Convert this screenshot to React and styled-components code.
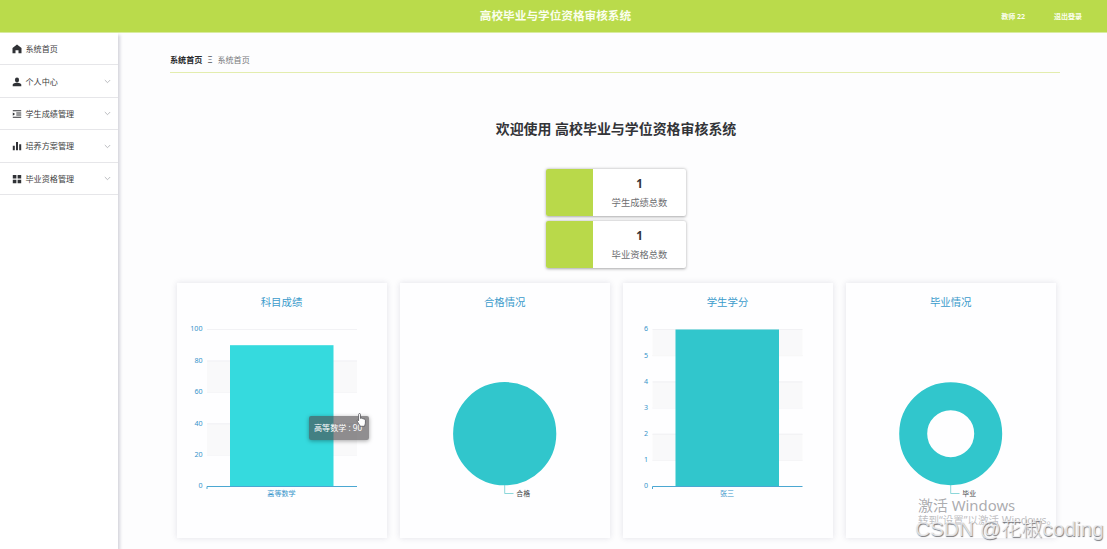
import React from 'react';
import styled, { createGlobalStyle } from 'styled-components';

const GlobalStyle = createGlobalStyle`
  * { box-sizing: border-box; }
  body {
    margin: 0;
    overflow: hidden;
    background: #fdfdfe;
    color: #303133;
    font-family: "Noto Sans", "Noto Sans CJK SC", sans-serif;
    font-size: 8px;
  }
`;

const Page = styled.div`
  position: relative;
  height: 549px;
  display: flex;
  flex-direction: column;
  overflow: hidden;
`;

const Header = styled.header`
  flex: none;
  height: 33px;
  display: grid;
  grid-template-columns: 1fr auto 1fr;
  align-items: center;
  padding: 0 25px 1px 29px;
  background: #badb4b;
  border-bottom: 1px solid #d9eca0;
  color: #fff;
  font-weight: 700;
`;

const HeaderTitle = styled.h1`
  grid-column: 2;
  margin: 0;
  font-size: 11.65px;
  line-height: 32px;
  color: #fbfeee;
`;

const HeaderLinks = styled.nav`
  display: flex;
  justify-content: flex-end;
  gap: 29px;
  font-size: 7px;
  color: #fbfeee;
`;

const Body = styled.div`
  flex: 1;
  display: flex;
  min-height: 0;
`;

const Sidebar = styled.aside`
  flex: none;
  width: 118px;
  background: #fff;
  box-shadow: 2px 2px 3px rgba(50, 50, 80, 0.2);
`;

const MenuItem = styled.div`
  height: 32.4px;
  display: flex;
  align-items: center;
  padding: 1px 7px 0 12px;
  border-bottom: 1px solid #e6e6e9;
  font-size: 8.1px;
  line-height: 12px;
  color: #3c3d40;
`;

const MenuIcon = styled.svg`
  width: 10px;
  height: 10px;
  margin-right: 3.5px;
  fill: #303236;
`;

const MenuLabel = styled.span`
  flex: 1;
`;

const Chevron = styled.svg`
  width: 7px;
  height: 5px;
  fill: none;
  stroke: #a9abb0;
  stroke-width: 0.8;
`;

const Main = styled.main`
  flex: 1;
  padding: 17px 47px 0 52px;
`;

const Breadcrumb = styled.div`
  height: 23px;
  display: flex;
  gap: 5px;
  border-bottom: 1.4px solid #e3edae;
  font-size: 8.1px;
  line-height: 20px;
  color: #77787b;
`;

const Current = styled.b`
  color: #27282b;
`;

const Separator = styled.span`
  width: 5px;
  text-align: center;
  color: #55565a;
`;

const Welcome = styled.h2`
  margin: 46px 0 0;
  padding-left: 2px;
  text-align: center;
  font-size: 13.95px;
  line-height: 20px;
  font-weight: 700;
  color: #333438;
`;

const Stats = styled.section`
  display: flex;
  flex-direction: column;
  align-items: center;
  gap: 5px;
  margin-top: 30px;
  padding-left: 2px;
`;

const StatCard = styled.div`
  width: 140px;
  height: 47px;
  display: flex;
  overflow: hidden;
  border-radius: 2px;
  background: #fff;
  box-shadow: 0 0.5px 3px rgba(0, 0, 0, 0.34);
`;

const StatSwatch = styled.div`
  width: 47px;
  background: #b9d94a;
`;

const StatText = styled.div`
  flex: 1;
  padding-top: 5px;
  text-align: center;
  font-size: 9.3px;
  line-height: 20px;
  color: #6d6e71;
`;

const StatValue = styled.div`
  font-size: 11.5px;
  line-height: 19px;
  font-weight: 700;
  color: #333438;
`;

const Charts = styled.section`
  display: grid;
  grid-template-columns: repeat(4, 210px);
  column-gap: 12.9px;
  margin: 15px 0 0 7px;
`;

const ChartCard = styled.article`
  height: 255px;
  background: #fefeff;
  box-shadow: 0 0 6px rgba(40, 40, 80, 0.13);
`;

const ChartSvg = styled.svg`
  display: block;
  overflow: visible;
`;

const ChartTitle = styled.text`
  font-size: 10.4px;
  text-anchor: middle;
  fill: #3b9bcb;
`;

const AxisText = styled.text`
  font-size: 7.1px;
  text-anchor: ${(p) => p.$anchor || 'middle'};
  fill: #3694ca;
`;

const SliceLabel = styled.text`
  font-size: 6.9px;
  fill: #44464a;
`;

const Tooltip = styled.div`
  position: absolute;
  left: 309px;
  top: 416px;
  width: 60px;
  height: 24px;
  padding-left: 5px;
  border-radius: 2px;
  background: rgba(76, 72, 76, 0.62);
  box-shadow: 0 1px 4px rgba(0, 0, 0, 0.35);
  color: #fff;
  font-size: 8.1px;
  line-height: 24px;
  white-space: nowrap;
`;

const Pointer = styled.svg`
  position: absolute;
  left: 356px;
  top: 413px;
`;

const Activation = styled.div`
  position: absolute;
  left: 918px;
  top: 496px;
  color: rgba(125, 125, 130, 0.65);
  white-space: nowrap;
  font-size: 14.9px;
  line-height: 18px;
`;

const ActivationHint = styled.div`
  font-size: 10.5px;
  line-height: 13px;
  color: rgba(125, 125, 130, 0.5);
`;

const Watermark = styled.div`
  position: absolute;
  left: 915px;
  top: 516px;
  font-family: "Liberation Sans", "Noto Sans CJK SC", sans-serif;
  font-size: 20.8px;
  font-weight: 300;
  line-height: 26px;
  white-space: nowrap;
  color: rgba(236, 236, 238, 0.85);
  text-shadow: 0.7px 0.7px 0.8px rgba(90, 90, 95, 0.8);
`;

const icons = {
  home: <path d="M5 .5.5 4.100V9.200h3V6.300h3v2.900h3V4.100Z" />,
  user: (
    <>
      <ellipse cx="5" cy="3" rx="2.1" ry="2.4" />
      <path d="M.7 9.200V7.500C1.200 6.400 3 6.100 4 5.800h2c1 .3 2.800.6 3.300 1.700v1.700Z" />
    </>
  ),
  list: <path d="M.8 1.300h8.400v1H.8Zm3.500 2.200h4.900v1H4.300Zm0 2.100h4.900v1H4.300ZM.8 7.800h8.400v1H.8Zm0-4.400 2.300 1.600L.8 6.700Z" />,
  bars: <path d="M.8 4.800h2v4.400h-2ZM4 1h2v8.200H4ZM7.200 3.300h2v5.900h-2Z" />,
  grid: <path d="M.8 1h3.600v3.500H.8Zm4.800 0h3.600v3.500H5.600ZM.8 5.700h3.600v3.500H.8Zm4.800 0h3.600v3.500H5.600Z" />,
};

const menu = [
  { icon: 'home', label: '系统首页' },
  { icon: 'user', label: '个人中心', open: true },
  { icon: 'list', label: '学生成绩管理', open: true },
  { icon: 'bars', label: '培养方案管理', open: true },
  { icon: 'grid', label: '毕业资格管理', open: true },
];

function BarChart({ title, ticks, value, category, color, left }) {
  const max = ticks[ticks.length - 1];
  const base = 203.5;
  const height = 157;
  const y = (v) => base - (v / max) * height;
  const right = left + 150;
  return (
    <ChartCard>
      <ChartSvg width="210" height="255">
        <ChartTitle x="104.500" y="22.500">{title}</ChartTitle>
        {ticks.slice(1).map((t, i) => (
          <React.Fragment key={t}>
            {i % 2 === 1 && (
              <rect x={left} y={y(t)} width="150" height={y(ticks[i]) - y(t)} fill="#f9f9fa" />
            )}
            <line x1={left} x2={right} y1={y(t)} y2={y(t)} stroke="#ededf0" strokeWidth=".7" />
          </React.Fragment>
        ))}
        <rect x={left + 23} y={y(value)} width="103.500" height={base - y(value)} fill={color} />
        <path d={`M${left} ${base + 2.5}v-2.500H${right}`} fill="none" stroke="#4ba7d2" strokeWidth="1" />
        {ticks.map((t) => (
          <AxisText key={t} x={left - 4.5} y={y(t) + 1.9} $anchor="end">{t}</AxisText>
        ))}
        <AxisText x={left + 74.5} y={base + 9.2}>{category}</AxisText>
      </ChartSvg>
    </ChartCard>
  );
}

function PieChart({ title, label, ring }) {
  return (
    <ChartCard>
      <ChartSvg width="210" height="255">
        <ChartTitle x="104.700" y="22.500">{title}</ChartTitle>
        <circle cx="104.700" cy="150.700" r={ring ? 37.5 : 25.8} fill="none" stroke="#31c6cc" strokeWidth={ring ? 28 : 51.6} />
        <path d="M104.700 202v8.500h8.800" fill="none" stroke="#6ecdd0" strokeWidth=".8" />
        <SliceLabel x="116.300" y="212.700">{label}</SliceLabel>
      </ChartSvg>
    </ChartCard>
  );
}

export default function App() {
  return (
    <Page>
      <GlobalStyle />
      <Header>
        <HeaderTitle>高校毕业与学位资格审核系统</HeaderTitle>
        <HeaderLinks>
          <span>教师 22</span>
          <span>退出登录</span>
        </HeaderLinks>
      </Header>
      <Body>
        <Sidebar>
          {menu.map((m) => (
            <MenuItem key={m.label}>
              <MenuIcon viewBox="0 0 10 10">{icons[m.icon]}</MenuIcon>
              <MenuLabel>{m.label}</MenuLabel>
              {m.open && (
                <Chevron viewBox="0 0 7 5"><path d="m.8 1 2.700 2.700L6.200 1" /></Chevron>
              )}
            </MenuItem>
          ))}
        </Sidebar>
        <Main>
          <Breadcrumb>
            <Current>系统首页</Current>
            <Separator>Ξ</Separator>
            <span>系统首页</span>
          </Breadcrumb>
          <Welcome>欢迎使用 高校毕业与学位资格审核系统</Welcome>
          <Stats>
            {['学生成绩总数', '毕业资格总数'].map((label) => (
              <StatCard key={label}>
                <StatSwatch />
                <StatText>
                  <StatValue>1</StatValue>
                  {label}
                </StatText>
              </StatCard>
            ))}
          </Stats>
          <Charts>
            <BarChart title="科目成绩" ticks={[0, 20, 40, 60, 80, 100]} value={90} category="高等数学" color="#35dade" left={30} />
            <PieChart title="合格情况" label="合格" />
            <BarChart title="学生学分" ticks={[0, 1, 2, 3, 4, 5, 6]} value={6} category="张三" color="#31c6cc" left={29.5} />
            <PieChart title="毕业情况" label="毕业" ring />
          </Charts>
        </Main>
      </Body>
      <Tooltip>高等数学 : 90</Tooltip>
      <Pointer width="11" height="15" viewBox="0 0 11 15">
        <path
          d="M2.600 1.500c0-1.300 1.900-1.300 1.900 0v4c.4-.7 1.700-.5 1.800.3.5-.6 1.500-.3 1.600.5.600-.4 1.500 0 1.500.8v3c0 1-.8 1.700-.8 3.200H4c0-1.300-1.400-2.500-2.200-4.100C1.200 8 1 7.300 1.500 7c.5-.2.8.2 1.100.7Z"
          fill="#fff"
          stroke="#55565a"
          strokeWidth=".8"
        />
      </Pointer>
      <Activation>
        激活 Windows
        <ActivationHint>转到“设置”以激活 Windows。</ActivationHint>
      </Activation>
      <Watermark>CSDN @花椒coding</Watermark>
    </Page>
  );
}
